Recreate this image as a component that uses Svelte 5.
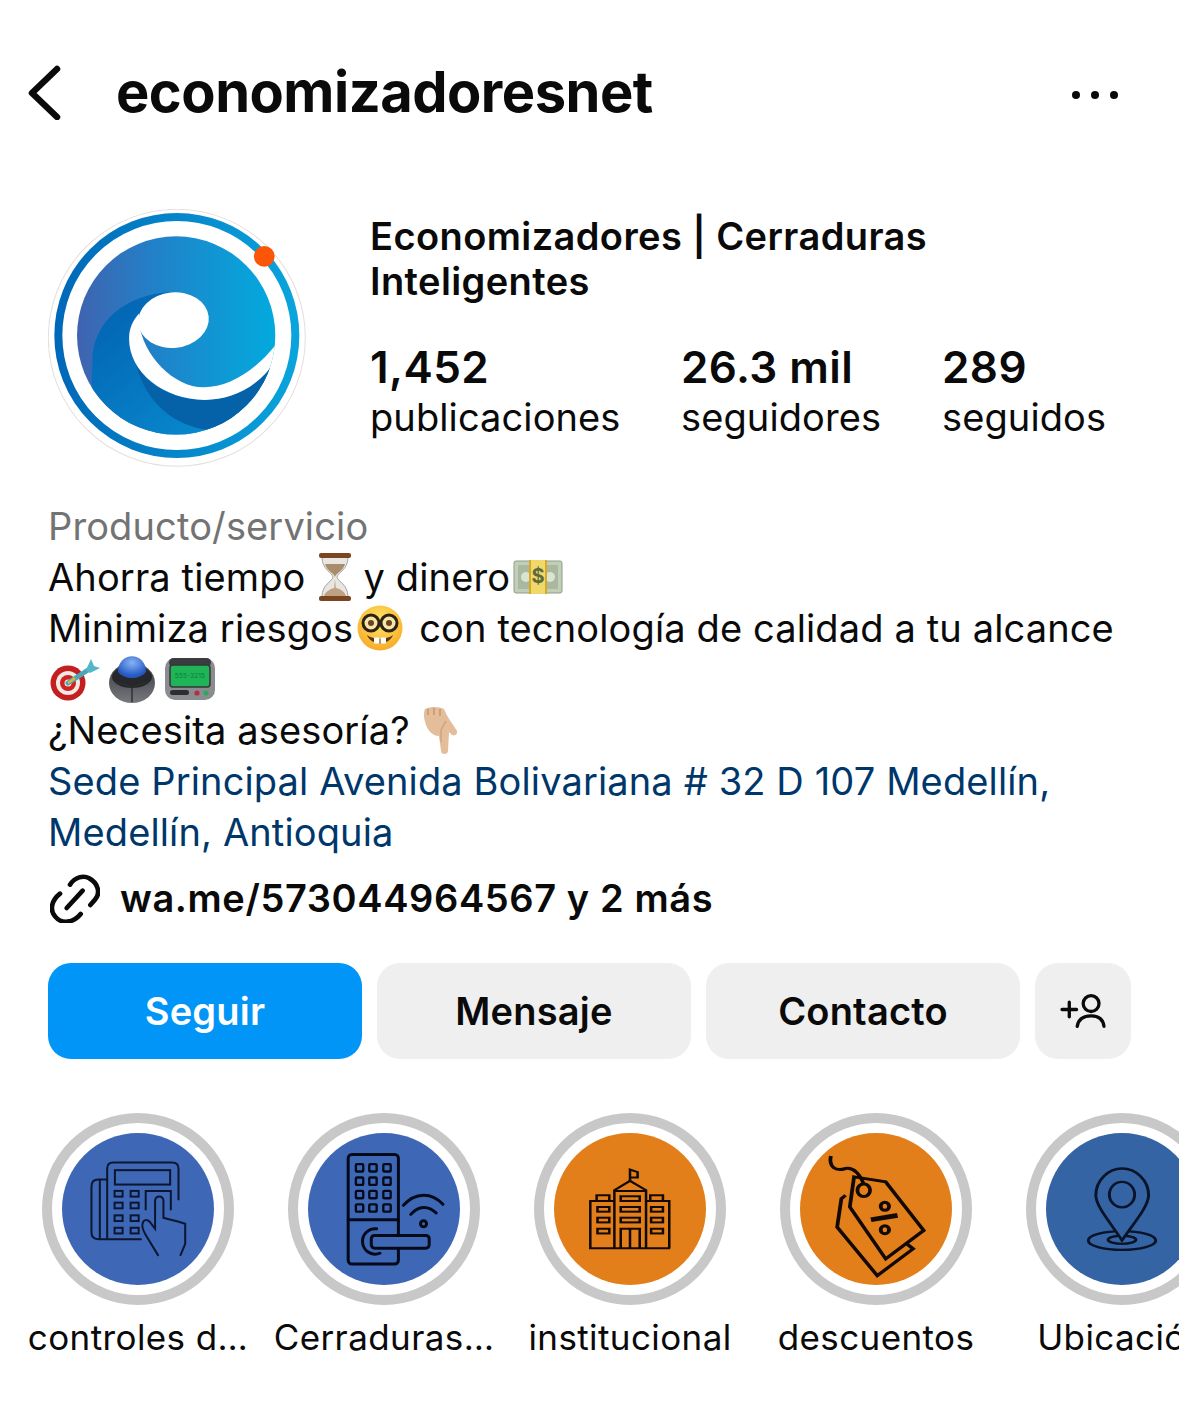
<script lang="ts">
  const stats = [
    { value: '1,452', label: 'publicaciones', width: 311 },
    { value: '26.3 mil', label: 'seguidores', width: 261 },
    { value: '289', label: 'seguidos', width: 200 }
  ];
</script>

<main class="page">
  <header class="topbar">
    <svg class="back" viewBox="0 0 34 56" aria-hidden="true">
      <path d="M29 5 L4 29 L29 53" />
    </svg>
    <h1>economizadoresnet</h1>
    <div class="more" aria-label="Más"><i></i><i></i><i></i></div>
  </header>

  <section class="profile">
    <svg class="avatar" viewBox="55 43 773 773" aria-hidden="true">
      <defs>
        <linearGradient id="disk" x1="0" x2="1" y1="0" y2="0">
          <stop offset="0" stop-color="#4063b0" />
          <stop offset="0.4" stop-color="#2082c8" />
          <stop offset="1" stop-color="#02aade" />
        </linearGradient>
        <linearGradient id="wave" x1="0" x2="1" y1="0" y2="1">
          <stop offset="0" stop-color="#0260b0" />
          <stop offset="1" stop-color="#0a96d6" />
        </linearGradient>
        <linearGradient id="ring" x1="0" x2="1" y1="0" y2="0">
          <stop offset="0" stop-color="#0068b8" />
          <stop offset="1" stop-color="#0aa4dc" />
        </linearGradient>
        <clipPath id="diskClip"><circle cx="439" cy="422" r="297" /></clipPath>
      </defs>
      <circle cx="441" cy="429" r="385" fill="#fff" stroke="#e4dfdc" stroke-width="3" />
      <circle cx="441" cy="422" r="355" fill="none" stroke="url(#ring)" stroke-width="24" />
      <circle cx="439" cy="422" r="297" fill="url(#disk)" />
      <g clip-path="url(#diskClip)">
        <path d="M188 500 C186 390 280 296 430 292 L325 360 C310 375 298 400 298 430 C296 530 400 615 525 615 C610 615 700 570 745 480 L760 760 L180 760 Z" fill="url(#wave)" />
        <path d="M318 505 C350 640 460 708 565 706 C650 680 715 590 745 475 C700 570 610 615 525 615 C430 615 350 570 318 505Z" fill="#0562a8" />
        <path d="M328 385 C340 480 430 577 522 577 C600 577 680 525 745 440 L745 480 C700 570 610 615 525 615 C400 615 296 530 298 430 C298 400 310 375 328 356 Z" fill="#fff" />
      </g>
      <ellipse cx="431" cy="376" rx="106" ry="83" fill="#fff" transform="rotate(-6 431 376)" />
      <circle cx="703" cy="185" r="31" fill="#fb5607" />
    </svg>

    <div class="summary">
      <h2>Economizadores | Cerraduras<br />Inteligentes</h2>
      <div class="stats">
        {#each stats as stat}
          <div class="stat" style="width: {stat.width}px">
            <strong>{stat.value}</strong>
            <span>{stat.label}</span>
          </div>
        {/each}
      </div>
    </div>
  </section>

  <section class="bio">
    <div class="line muted">Producto/servicio</div>
    <div class="line">
      <span>Ahorra tiempo</span>
      <svg class="emoji hourglass" viewBox="0 0 40 50" aria-hidden="true">
        <path d="M7 5 H33 C33 18 23 20 22 25 C23 30 33 32 33 45 H7 C7 32 17 30 18 25 C17 20 7 18 7 5Z" fill="#e8e6e3" stroke="#a9a5a0" stroke-width="1" />
        <path d="M10 12 H30 C28 19 21 21 20 25 C19 21 12 19 10 12Z" fill="#a98c6c" />
        <path d="M20 27 L20.8 36 C26 37 30 40 31 44 H9 C10 40 15 37 19.2 36Z" fill="#bfa283" />
        <rect x="4" y="1" width="32" height="5" rx="2" fill="#7b4522" />
        <rect x="4" y="44" width="32" height="5" rx="2" fill="#7b4522" />
      </svg>
      <span class="after-hourglass">y dinero</span>
      <svg class="emoji money" viewBox="0 0 50 34" aria-hidden="true">
        <rect x="1" y="1" width="48" height="32" rx="2" fill="#c3ceb8" stroke="#8e9c86" />
        <rect x="5" y="5" width="40" height="24" fill="#a9b99f" />
        <circle cx="13" cy="17" r="5" fill="#dbe4d2" />
        <circle cx="37" cy="17" r="5" fill="#dbe4d2" />
        <rect x="16" y="0" width="18" height="34" fill="#f1d86a" />
        <rect x="16" y="0" width="2" height="34" fill="#d7a928" />
        <rect x="32" y="0" width="2" height="34" fill="#d7a928" />
        <text x="25" y="23" class="dollar">$</text>
      </svg>
    </div>
    <div class="line">
      <span>Minimiza riesgos</span>
      <svg class="emoji nerd" viewBox="0 0 46 46" aria-hidden="true">
        <defs>
          <radialGradient id="face" cx="0.5" cy="0.35" r="0.7">
            <stop offset="0" stop-color="#ffe968" />
            <stop offset="1" stop-color="#f6a623" />
          </radialGradient>
        </defs>
        <circle cx="23" cy="23" r="22.5" fill="url(#face)" />
        <circle cx="14" cy="18" r="8" fill="#f5e6a8" stroke="#2f2113" stroke-width="3" />
        <circle cx="32" cy="18" r="8" fill="#f5e6a8" stroke="#2f2113" stroke-width="3" />
        <path d="M21 17 H25" stroke="#2f2113" stroke-width="3" />
        <circle cx="14" cy="18" r="3" fill="#6b4420" />
        <circle cx="32" cy="18" r="3" fill="#6b4420" />
        <path d="M10 30 C16 35 30 35 36 30 C32 41 14 41 10 30Z" fill="#5b3518" />
        <rect x="17" y="32.5" width="5.5" height="6" rx="1" fill="#fff" />
        <rect x="23.5" y="32.5" width="5.5" height="6" rx="1" fill="#fff" />
      </svg>
      <span class="after-nerd">con tecnología de calidad a tu alcance</span>
    </div>
    <div class="line emoji-line">
      <svg class="emoji dart" viewBox="0 0 50 44" aria-hidden="true">
        <circle cx="18" cy="26" r="17.5" fill="#c41f1f" />
        <circle cx="18" cy="26" r="12" fill="#f3e9e4" />
        <circle cx="18" cy="26" r="8" fill="#cf2323" />
        <circle cx="18" cy="26" r="3.5" fill="#f3e9e4" />
        <path d="M18 26 L38 13" stroke="#4aa7b8" stroke-width="5" stroke-linecap="round" />
        <path d="M36 13 L41 2 L44 9 L50 11 L40 16Z" fill="#52b7c6" />
        <path d="M18 26 L25 21" stroke="#e0b341" stroke-width="2.4" />
      </svg>
      <svg class="emoji trackball" viewBox="0 0 46 48" aria-hidden="true">
        <defs>
          <radialGradient id="ball" cx="0.5" cy="0.3" r="0.6">
            <stop offset="0" stop-color="#86b4f5" />
            <stop offset="1" stop-color="#2558c4" />
          </radialGradient>
          <linearGradient id="base" x1="0" x2="0" y1="0" y2="1">
            <stop offset="0" stop-color="#3a3b40" />
            <stop offset="1" stop-color="#77787d" />
          </linearGradient>
        </defs>
        <ellipse cx="23" cy="28" rx="23" ry="20" fill="url(#base)" />
        <ellipse cx="23" cy="22" rx="20" ry="11" fill="#26272b" />
        <path d="M9 17 C9 -4 37 -4 37 17 C30 25 16 25 9 17Z" fill="url(#ball)" />
        <path d="M23 32 V47 M23 32 L7 27 M23 32 L39 27" stroke="#2c2d31" stroke-width="1.4" fill="none" />
      </svg>
      <svg class="emoji pager" viewBox="0 0 52 44" aria-hidden="true">
        <rect x="1" y="1" width="50" height="42" rx="10" fill="#8b8c8f" />
        <rect x="5" y="1" width="42" height="9" rx="4.5" fill="#3b3c3f" />
        <rect x="6" y="8" width="40" height="22" rx="3" fill="#1fb455" stroke="#35363a" stroke-width="1.5" />
        <text x="26" y="21" class="pager-text">555-3215</text>
        <rect x="6" y="33" width="19" height="5" rx="2.5" fill="#2c2d30" />
        <circle cx="33" cy="36" r="2.6" fill="#b03048" />
        <circle cx="42" cy="36" r="2.6" fill="#2ea85a" />
      </svg>
    </div>
    <div class="line">
      <span>¿Necesita asesoría?</span>
      <svg class="emoji finger" viewBox="0 0 38 48" aria-hidden="true">
        <path d="M5 3 C12 0 20 1 24 3 C27 11 32 17 37 25 C38 28 35 30 32 29 L29 26 L28 45 C28 49 21 49 21 45 L19 30 C13 30 8 25 6 19 C4 13 3 8 5 3Z" fill="#e4bd9a" />
        <path d="M8 3 V9 M14 2 V9 M20 3 V10" stroke="#b98e6c" stroke-width="1.2" fill="none" />
        <path d="M26 15 L21 24 L21 36" stroke="#c99f7c" stroke-width="1.2" fill="none" />
      </svg>
    </div>
    <div class="line link">Sede Principal Avenida Bolivariana # 32 D 107 Medellín,</div>
    <div class="line link">Medellín, Antioquia</div>
  </section>

  <div class="website">
    <svg class="chain" viewBox="90 40 150 150" aria-hidden="true">
      <path d="M150 75 C165 52 190 46 208 56 C235 70 242 102 225 120 L211 136" />
      <path d="M120 102 C95 122 88 150 105 170 C125 195 160 190 182 163" />
      <path d="M140 145 L188 93" />
    </svg>
    <span>wa.me/573044964567 y 2 más</span>
  </div>

  <div class="actions">
    <button type="button" class="button primary">Seguir</button>
    <button type="button" class="button">Mensaje</button>
    <button type="button" class="button">Contacto</button>
    <button type="button" class="button square" aria-label="Sugerencias">
      <svg viewBox="115 125 145 115" aria-hidden="true">
        <path d="M124 178 H168 M146 156 V200" />
        <circle cx="212" cy="160" r="24" />
        <path d="M170 229 C174 205 192 197 212 197 C232 197 248 205 251 229" />
      </svg>
    </button>
  </div>

  <div class="highlights">
    <div class="highlight">
      <div class="ring">
        <svg class="cover keypad" viewBox="97 99 454 454" aria-hidden="true">
          <rect x="97" y="99" width="454" height="454" fill="#3e68b6" />
          <path d="M232 415 V205 Q232 187 250 187 H425 Q445 187 445 205 V300" />
          <path d="M232 238 H205 Q185 238 185 260 V395 Q185 416 205 416 H335" />
          <path d="M210 238 V416" />
          <rect x="255" y="210" width="165" height="43" />
          <path d="M347 330 V272 H422 V330" />
          {#each [272, 307, 345, 382] as y}
            <rect x="254" {y} width="24" height="17" />
            <rect x="302" {y} width="24" height="17" />
          {/each}
          <path d="M385 466 L345 400 C328 370 342 348 360 365 L375 385 V302 C375 284 400 284 400 302 V352 C420 358 442 362 465 370 V430 L450 466" fill="#3e68b6" />
        </svg>
      </div>
      <span class="caption">controles d…</span>
    </div>

    <div class="highlight">
      <div class="ring">
        <svg class="cover lock" viewBox="835 99 454 454" aria-hidden="true">
          <rect x="835" y="99" width="454" height="454" fill="#3e68b6" />
          <rect x="955" y="163" width="150" height="327" rx="11" />
          <path d="M955 358 H1105" />
          {#each [192, 232, 272, 312] as y}
            {#each [978, 1018, 1060] as x}
              <rect {x} {y} width="22" height="22" rx="3" class="key" />
            {/each}
          {/each}
          <path d="M1120 315 C1155 275 1205 275 1238 312" />
          <path d="M1142 342 C1165 315 1195 315 1218 338" />
          <circle cx="1180" cy="370" r="9" />
          <path d="M1040 385 A38 38 0 1 0 1050 458" />
          <rect x="1024" y="405" width="173" height="38" rx="10" fill="#3e68b6" />
        </svg>
      </div>
      <span class="caption">Cerraduras…</span>
    </div>

    <div class="highlight">
      <div class="ring">
        <svg class="cover building" viewBox="82 99 360 454" preserveAspectRatio="none" aria-hidden="true">
          <rect x="82" y="99" width="360" height="454" fill="#e27f1b" />
          <path d="M165 443 H357 M168 443 V302 H225 M355 443 V302 H300 M225 443 V270 L262 242 L300 270 V443 M225 272 H300" />
          <path d="M262 242 V208 L280 216 V232 L262 232" />
          <rect x="183" y="285" width="30" height="17" />
          <rect x="310" y="285" width="30" height="17" />
          {#each [320, 352, 385] as y}
            <rect x="185" {y} width="28" height="14" />
            <rect x="312" {y} width="28" height="14" />
          {/each}
          {#each [288, 320, 352] as y}
            <rect x="240" {y} width="45" height="14" />
          {/each}
          <path d="M240 443 V385 H285 V443 M262 385 V443" />
        </svg>
      </div>
      <span class="caption">institucional</span>
    </div>

    <div class="highlight">
      <div class="ring">
        <svg class="cover tags" viewBox="667 99 360 454" preserveAspectRatio="none" aria-hidden="true">
          <rect x="667" y="99" width="360" height="454" fill="#e27f1b" />
          <path d="M775 285 L765 295 L755 380 L850 525 L935 445 L920 430" />
          <path d="M795 230 L870 245 L960 390 L870 475 L785 320 Z" />
          <ellipse cx="818" cy="270" rx="15" ry="19" />
          <path d="M740 168 C735 200 750 215 775 205 C795 200 810 225 818 252" />
          <ellipse cx="868" cy="318" rx="10" ry="12" />
          <ellipse cx="868" cy="388" rx="10" ry="12" />
          <path d="M835 358 L898 345" class="bar" />
        </svg>
      </div>
      <span class="caption">descuentos</span>
    </div>

    <div class="highlight">
      <div class="ring">
        <svg class="cover pin" viewBox="1252 99 360 454" preserveAspectRatio="none" aria-hidden="true">
          <rect x="1252" y="99" width="360" height="454" fill="#3464a4" />
          <ellipse cx="1432" cy="420" rx="80" ry="28" />
          <ellipse cx="1432" cy="418" rx="33" ry="12" />
          <path d="M1432 205 C1400 205 1370 240 1370 285 C1370 320 1410 375 1432 420 C1455 375 1495 320 1495 285 C1495 240 1465 205 1432 205Z" fill="#3464a4" />
          <ellipse cx="1432" cy="283" rx="30" ry="38" />
        </svg>
      </div>
      <span class="caption">Ubicación</span>
    </div>
  </div>
</main>

<style>
  :global(body) {
    background: #fff;
    overflow: hidden;
  }

  .page {
    width: 1179px;
    height: 1428px;
    overflow: hidden;
    font-family: Inter, 'Liberation Sans', sans-serif;
    color: #0a0a0a;
    background: #fff;
  }

  .topbar {
    display: flex;
    align-items: center;
    height: 60px;
    padding: 62px 61px 0 28px;
  }

  .back {
    width: 34px;
    height: 56px;
    margin-right: 54px;
    flex: none;
  }

  .back path {
    fill: none;
    stroke: #0a0a0a;
    stroke-width: 6.5;
    stroke-linecap: round;
    stroke-linejoin: round;
  }

  h1 {
    margin: 0;
    flex: 1;
    font-size: 56px;
    font-weight: 700;
    letter-spacing: -0.5px;
  }

  .more {
    display: flex;
    gap: 11px;
    padding-top: 5px;
  }

  .more i {
    width: 8px;
    height: 8px;
    border-radius: 50%;
    background: #0a0a0a;
  }

  .profile {
    display: flex;
    margin-top: 87px;
    padding-left: 48px;
  }

  .avatar {
    width: 258px;
    height: 258px;
    flex: none;
    margin-right: 64px;
  }

  .summary {
    padding-top: 5px;
  }

  h2 {
    margin: 0;
    font-size: 38px;
    line-height: 45px;
    font-weight: 600;
    letter-spacing: 0.4px;
  }

  .stats {
    display: flex;
    margin-top: 38px;
  }

  .stat {
    display: flex;
    flex-direction: column;
  }

  .stat strong {
    font-size: 44px;
    line-height: 50px;
    font-weight: 600;
    letter-spacing: 0.4px;
  }

  .stat span {
    font-size: 38px;
    line-height: 50px;
    letter-spacing: 0.1px;
  }

  .bio {
    margin-top: 33px;
    padding-left: 48px;
    font-size: 38px;
    letter-spacing: 0.13px;
  }

  .line {
    display: flex;
    align-items: center;
    height: 51px;
    white-space: pre;
  }

  .muted {
    color: #737373;
  }

  .link {
    color: #00376b;
  }

  .emoji {
    flex: none;
  }

  .hourglass {
    width: 40px;
    height: 50px;
    margin-left: 9px;
  }

  .after-hourglass {
    margin-left: 9px;
  }

  .money {
    width: 50px;
    height: 34px;
    margin-left: 3px;
  }

  .dollar {
    font-size: 20px;
    font-weight: 700;
    text-anchor: middle;
    fill: #5c6b3c;
  }

  .nerd {
    width: 46px;
    height: 46px;
    margin-left: 4px;
  }

  .after-nerd {
    margin-left: 16px;
  }

  .dart {
    width: 50px;
    height: 44px;
    margin-left: 2px;
  }

  .trackball {
    width: 46px;
    height: 48px;
    margin-left: 9px;
  }

  .pager {
    width: 52px;
    height: 44px;
    margin-left: 9px;
  }

  .pager-text {
    font-size: 6.5px;
    text-anchor: middle;
    fill: #0c7b3a;
  }

  .finger {
    width: 38px;
    height: 48px;
    margin-left: 10px;
  }

  .website {
    display: flex;
    align-items: center;
    gap: 20px;
    margin-top: 16px;
    padding-left: 50px;
    height: 50px;
    font-size: 38px;
    font-weight: 600;
    letter-spacing: 0.6px;
  }

  .chain {
    width: 50px;
    height: 50px;
    flex: none;
  }

  .chain path {
    fill: none;
    stroke: #0a0a0a;
    stroke-width: 14;
    stroke-linecap: round;
  }

  .actions {
    display: flex;
    gap: 15px;
    margin-top: 40px;
    padding-left: 48px;
  }

  .button {
    width: 314px;
    height: 96px;
    padding: 0;
    border: none;
    border-radius: 23px;
    background: #efefef;
    color: #0a0a0a;
    font-family: inherit;
    font-size: 38px;
    font-weight: 600;
    letter-spacing: 0.2px;
  }

  .primary {
    background: #0095f6;
    color: #fff;
  }

  .square {
    display: flex;
    align-items: center;
    justify-content: center;
    width: 96px;
  }

  .square svg {
    width: 48px;
    height: 38px;
  }

  .square path,
  .square circle {
    fill: none;
    stroke: #0a0a0a;
    stroke-width: 10;
    stroke-linecap: round;
  }

  .highlights {
    display: flex;
    gap: 54px;
    margin-top: 54px;
    padding-left: 42px;
  }

  .highlight {
    display: flex;
    flex-direction: column;
    align-items: center;
    flex: none;
    width: 192px;
  }

  .ring {
    box-sizing: border-box;
    width: 192px;
    height: 192px;
    padding: 10px;
    border: 10px solid #c8c8c8;
    border-radius: 50%;
  }

  .cover {
    display: block;
    width: 152px;
    height: 152px;
    border-radius: 50%;
  }

  .cover :global(path),
  .cover :global(circle),
  .cover :global(ellipse),
  .cover :global(rect:not(:first-child)) {
    fill: none;
    stroke: #0c1630;
    stroke-width: 6;
  }

  .cover :global(path[fill]),
  .cover :global(rect[fill]:not(:first-child)) {
    fill: #3e68b6;
  }

  .lock :global(path),
  .lock :global(circle),
  .lock :global(rect:not(:first-child)) {
    stroke: #050a1a;
    stroke-width: 9;
    stroke-linecap: round;
  }

  .lock :global(rect.key) {
    stroke-width: 7;
  }

  .building :global(path),
  .building :global(rect:not(:first-child)),
  .tags :global(path),
  .tags :global(ellipse) {
    stroke: #120a02;
    stroke-width: 6;
  }

  .tags :global(path),
  .tags :global(ellipse) {
    stroke-width: 9;
  }

  .tags :global(.bar) {
    stroke-width: 14;
  }

  .pin :global(path),
  .pin :global(ellipse) {
    stroke: #0a1428;
    stroke-width: 7;
  }

  .pin :global(path[fill]) {
    fill: #3464a4;
  }

  .caption {
    margin-top: 12px;
    font-size: 35px;
    line-height: 40px;
    letter-spacing: 0.4px;
    white-space: nowrap;
  }
</style>
